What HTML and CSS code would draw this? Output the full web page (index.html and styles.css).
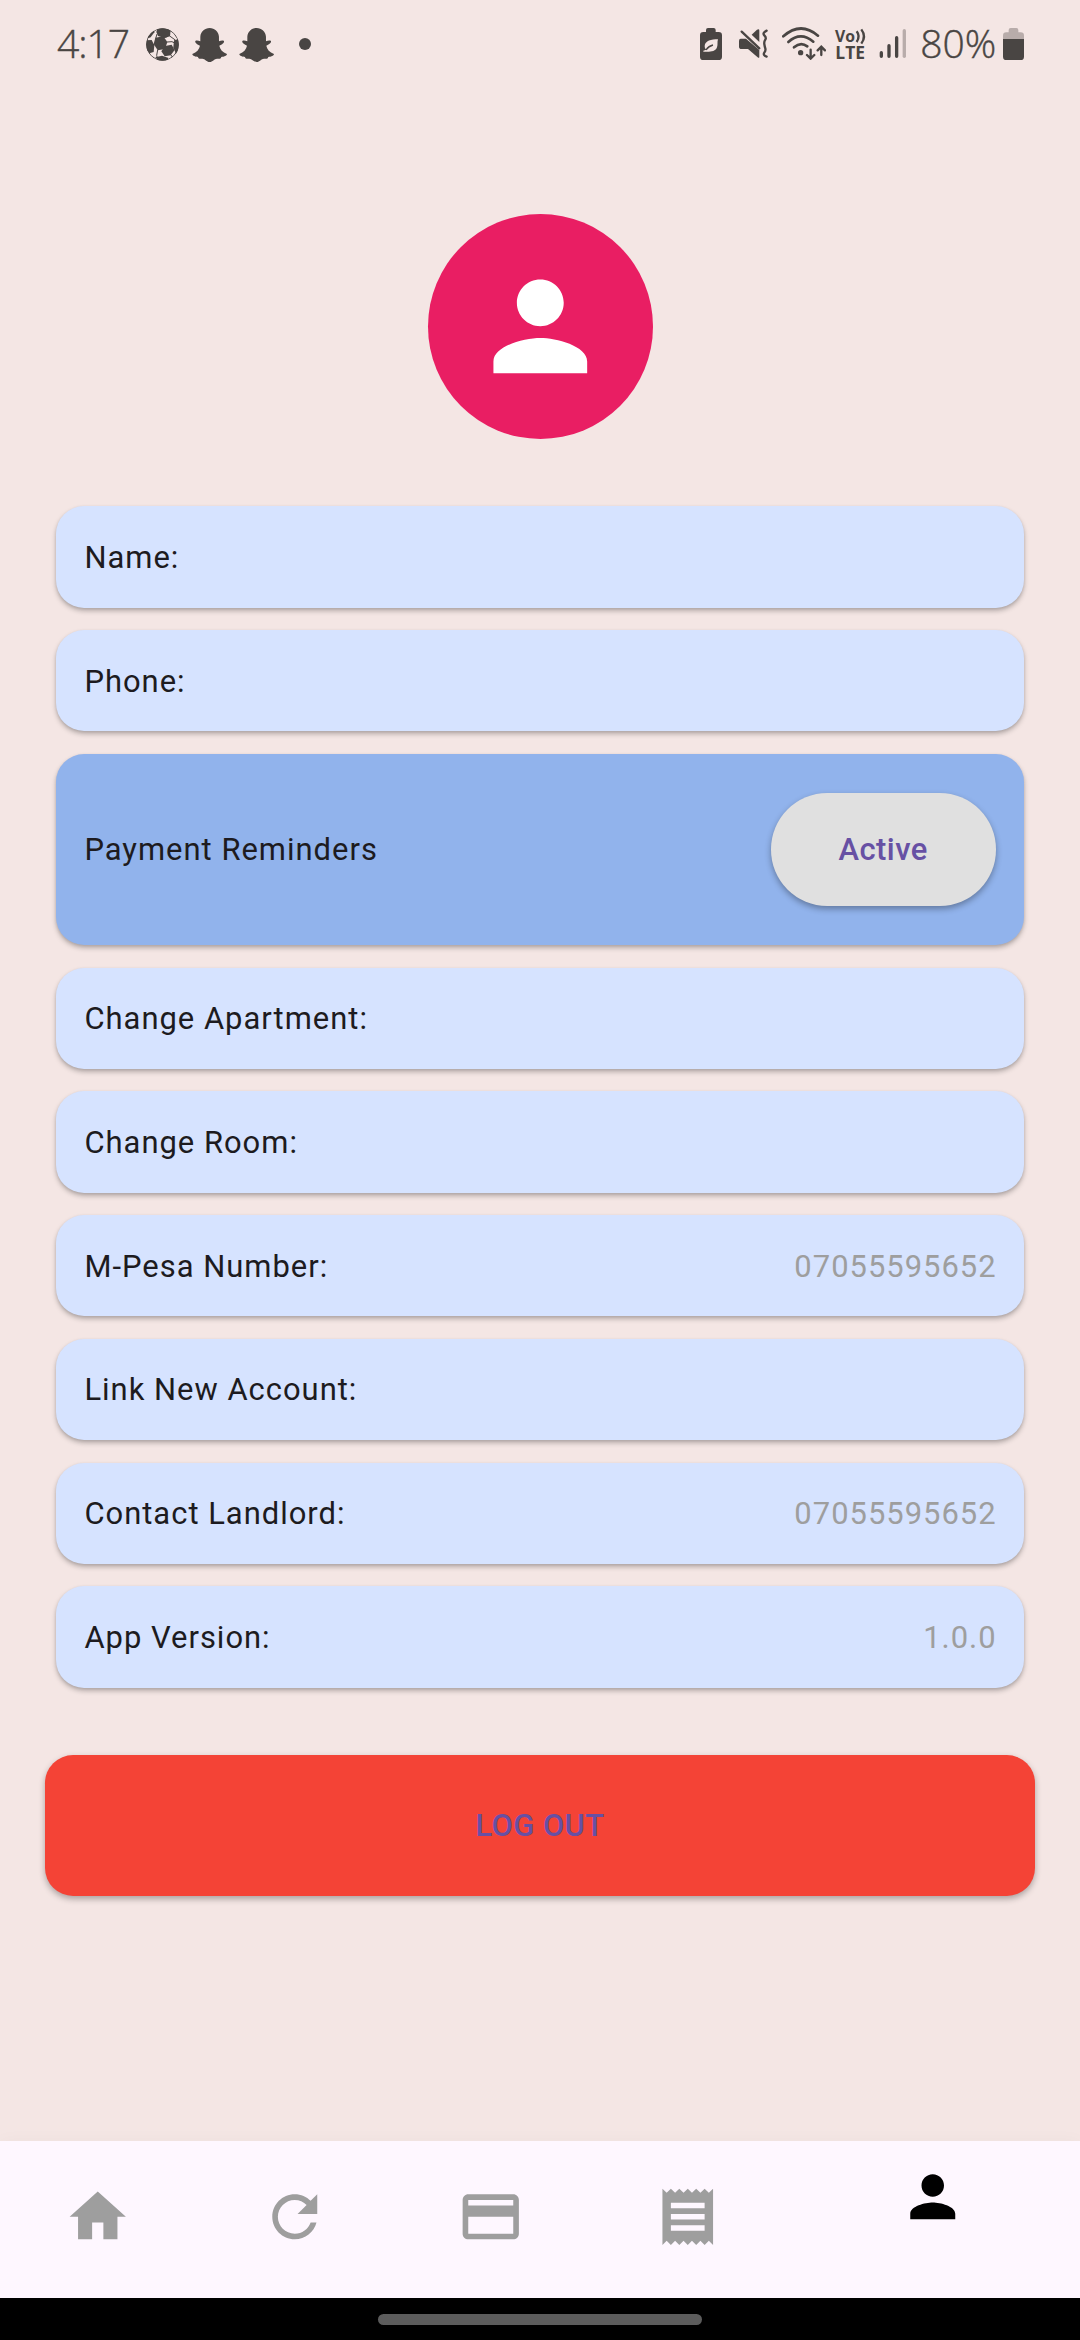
FILE: index.html
```html
<!DOCTYPE html>
<html lang="en">
<head>
<meta charset="utf-8">
<title>Profile</title>
<link rel="stylesheet" href="styles.css">
</head>
<body>
<div class="screen">
  <header class="status-bar">
    <div class="status-left">
      <span class="clock">4:17</span>
      <svg class="ball" viewBox="0 0 99 99">
        <defs><clipPath id="ball-clip"><circle cx="49.500" cy="49.500" r="49"/></clipPath></defs>
        <g clip-path="url(#ball-clip)" fill="#494543">
          <path d="M28 29 52 25 64 42 57 63 35 67 23 48Z"/>
          <path d="M34 2 Q55-4 74 6L72 25 56 30 36 24 31 12Z"/>
          <path d="M-2 37 17 36 25 52 23 72 10 76-2 60Z"/>
          <path d="M57 54 77 50 86 66 74 82 56 85 46 70Z"/>
          <path d="M84 37 100 33V74L90 78 82 58Z"/>
          <path d="M28 88 48 83 68 90 60 100H38Z"/>
          <path d="M2 32 Q8 14 24 5L25 13 14 28Z"/>
          <g fill="none" stroke="#494543" stroke-width="3">
            <path d="M33 18 29 32M62 27 52 28M63 42 78 41 86 45M71 24 88 36M57 60 61 56M24 49 16 52M35 66 32 82M32 82 34 90M74 80 80 88"/>
            <circle cx="49.500" cy="49.500" r="48"/>
          </g>
        </g>
      </svg>
      <svg class="ghost" viewBox="0 0 106 102"><path d="M53 0C68 0 80 11 81 26V40C86 39 91 36 96 39 98 44 90 50 82 53 84 64 92 73 105 78 105 84 95 86 88 87 86 94 81 92 75 92 67 92 62 102 53 102S39 92 31 92C25 92 20 94 18 87 11 86 1 84 1 78 14 73 22 64 24 53 16 50 8 44 10 39 15 36 20 39 25 40V26C26 11 38 0 53 0Z"/></svg>
      <svg class="ghost" viewBox="0 0 106 102"><path d="M53 0C68 0 80 11 81 26V40C86 39 91 36 96 39 98 44 90 50 82 53 84 64 92 73 105 78 105 84 95 86 88 87 86 94 81 92 75 92 67 92 62 102 53 102S39 92 31 92C25 92 20 94 18 87 11 86 1 84 1 78 14 73 22 64 24 53 16 50 8 44 10 39 15 36 20 39 25 40V26C26 11 38 0 53 0Z"/></svg>
      <span class="more-dot"></span>
    </div>
    <div class="status-right">
      <svg class="battery-saver" viewBox="0 0 66 96">
        <path d="M18 12V6Q18 0 24 0H41Q47 0 47 6V12H56Q66 12 66 22V86Q66 96 56 96H10Q0 96 0 86V22Q0 12 10 12Z"/>
        <path d="M54 34C34 34 15 38 14 54 14 60 16 63 19 65L10 68V71C24 72 47 73 51 58 54 50 51 42 54 34Z" fill="#f4e6e4"/>
        <path d="M18 66Q26 54 39 51" fill="none" stroke="#494543" stroke-width="4"/>
      </svg>
      <svg class="mute" viewBox="0 0 88 88">
        <path d="M5 29H21L61 63V83Q61 89 56 85L27 60H8Q0 60 0 53V36Q0 29 5 29Z"/>
        <path d="M38 17 54 2Q61-2 61 5V39Z"/>
        <path d="M8 8 61 58" fill="none" stroke="#494543" stroke-width="7" stroke-linecap="round"/>
        <path d="M83 5Q69 12 76 19T79 32 76 45 79 58 76 71 83 83" fill="none" stroke="#494543" stroke-width="7" stroke-linecap="round"/>
      </svg>
      <svg class="wifi" viewBox="0 0 133 100">
        <g fill="none" stroke="#494543" stroke-width="8" stroke-linecap="round">
          <path d="M4 28Q56-18 108 26"/><path d="M19 45Q56 12 94 44"/><path d="M36 61Q56 43 76 58"/>
          <path d="M86 68V93M75 84 86 95 97 84M118 84V60M107 70 118 59 129 70" stroke-width="7"/>
        </g><circle cx="56" cy="77" r="8"/>
      </svg>
      <svg class="volte" viewBox="0 0 94 96">
        <text x="0" y="41" font-size="50" textLength="60" lengthAdjust="spacingAndGlyphs">Vo</text>
        <path d="M65 10Q77 25 65 42M79 4Q95 25 79 47" fill="none" stroke="#494543" stroke-width="7"/>
        <text x="1" y="93" font-size="52" textLength="89" lengthAdjust="spacingAndGlyphs">LTE</text>
      </svg>
      <svg class="signal" viewBox="0 0 82 88"><g stroke="#494543" stroke-width="10" stroke-linecap="round"><path d="M7 71V82M30 50V82M53 26V82"/><path d="M76 5V82" stroke="#b8acaa"/></g></svg>
      <span class="percent">80%</span>
      <svg class="battery" viewBox="0 0 63 96">
        <path d="M17 13V6Q17 0 23 0H40Q46 0 46 6V13H53Q63 13 63 23V34H0V23Q0 13 10 13Z" fill="#b8acaa"/>
        <path d="M0 33H63V86Q63 96 53 96H10Q0 96 0 86Z"/>
      </svg>
    </div>
  </header>

  <main class="profile">
    <div class="avatar"><svg viewBox="0 0 24 24"><path d="M12 12c2.210 0 4-1.790 4-4s-1.790-4-4-4-4 1.790-4 4 1.790 4 4 4zm0 2c-2.670 0-8 1.340-8 4v2h16v-2c0-2.660-5.330-4-8-4z"/></svg></div>
    <section class="settings">
      <div class="row"><span>Name:</span></div>
      <div class="row"><span>Phone:</span></div>
      <div class="row row-reminders"><span>Payment Reminders</span><button class="toggle">Active</button></div>
      <div class="row"><span>Change Apartment:</span></div>
      <div class="row"><span>Change Room:</span></div>
      <div class="row"><span>M-Pesa Number:</span><span class="value">07055595652</span></div>
      <div class="row"><span>Link New Account:</span></div>
      <div class="row"><span>Contact Landlord:</span><span class="value">07055595652</span></div>
      <div class="row"><span>App Version:</span><span class="value">1.0.0</span></div>
    </section>
    <button class="logout">LOG OUT</button>
  </main>

  <nav class="tabs">
    <a class="tab"><svg viewBox="0 0 24 24"><path d="M10 20v-6h4v6h5v-8h3L12 3 2 12h3v8z"/></svg></a>
    <a class="tab"><svg viewBox="0 0 24 24"><path d="M17.650 6.350C16.200 4.900 14.210 4 12 4c-4.420 0-7.990 3.580-7.990 8s3.570 8 7.990 8c3.730 0 6.840-2.550 7.730-6h-2.080c-.82 2.330-3.040 4-5.650 4-3.310 0-6-2.690-6-6s2.690-6 6-6c1.660 0 3.140.69 4.220 1.780L13 11h7V4l-2.350 2.350z"/></svg></a>
    <a class="tab"><svg viewBox="0 0 24 24"><path d="M20 4H4c-1.110 0-1.990.89-1.990 2L2 18c0 1.110.89 2 2 2h16c1.110 0 2-.89 2-2V6c0-1.110-.89-2-2-2zm0 14H4v-6h16v6zm0-10H4V6h16v2z"/></svg></a>
    <a class="tab"><svg viewBox="0 0 24 24"><path d="M18 17H6v-2h12v2zm0-4H6v-2h12v2zm0-4H6V7h12v2zM3 22l1.500-1.500L6 22l1.500-1.500L9 22l1.500-1.500L12 22l1.500-1.500L15 22l1.500-1.500L18 22l1.500-1.500L21 22V2l-1.500 1.500L18 2l-1.500 1.500L15 2l-1.500 1.500L12 2l-1.500 1.500L9 2 7.500 3.500 6 2 4.500 3.500 3 2v20z"/></svg></a>
    <a class="tab tab-active"><svg viewBox="0 0 24 24"><path d="M12 12c2.210 0 4-1.790 4-4s-1.790-4-4-4-4 1.790-4 4 1.790 4 4 4zm0 2c-2.670 0-8 1.340-8 4v2h16v-2c0-2.660-5.330-4-8-4z"/></svg></a>
  </nav>
  <footer class="gesture-bar"><span class="handle"></span></footer>
</div>
</body>
</html>
```

FILE: styles.css
```css
* { box-sizing: border-box; }
body { margin: 0; }
svg { display: block; flex: none; }
button { border: 0; margin: 0; padding: 0; font: inherit; letter-spacing: inherit; }

.screen {
  width: 1080px;
  height: 2340px;
  display: flex;
  flex-direction: column;
  overflow: hidden;
  background: #f4e6e4;
  font-family: Roboto, sans-serif;
  font-size: 30.94px;
  letter-spacing: 1px;
  color: #1d1b20;
}

/* Status bar */
.status-bar {
  height: 88px;
  padding: 0 17px 0 57px;
  display: flex;
  justify-content: space-between;
  align-items: center;
  color: #494543;
  fill: #494543;
  font-family: "Open Sans", "Noto Sans", sans-serif;
  font-size: 39px;
  font-weight: 350;
  letter-spacing: 0;
}
.status-left, .status-right { display: flex; align-items: center; }
.clock { width: 89px; padding-bottom: 3px; letter-spacing: -1px; -webkit-text-stroke: .4px #494543; }
.ball { width: 33px; height: 33px; margin-right: 13px; }
.ghost { width: 35.300px; height: 34px; margin: 2px 11.700px 0 0; }
.more-dot { width: 12px; height: 12px; margin-left: 13px; border-radius: 50%; background: #494543; }
.status-right { padding-right: 39px; }
.battery-saver { width: 22px; height: 32px; margin-right: 17px; }
.mute { width: 29.300px; height: 29.300px; margin-right: 14.300px; }
.wifi { width: 44.300px; height: 33.300px; margin: -1px 9px 0 0; }
.volte { width: 31.300px; height: 32px; margin-right: 12.300px; font-family: "Open Sans", sans-serif; font-weight: 700; overflow: visible; }
.signal { width: 27.300px; height: 29.300px; margin-right: 14px; }
.percent { width: 82.700px; padding-bottom: 3px; white-space: nowrap; -webkit-text-stroke: .4px #494543; }
.battery { width: 21px; height: 32px; }

/* Profile content */
.profile {
  flex: 1;
  padding: 125.750px 45px 0;
  display: flex;
  flex-direction: column;
  align-items: center;
}
.avatar {
  width: 225px;
  height: 225px;
  flex: none;
  display: flex;
  align-items: center;
  justify-content: center;
  border-radius: 50%;
  background: #e91e63;
  fill: #fff;
}
.avatar svg { width: 140.600px; height: 140.600px; }
.settings {
  align-self: stretch;
  margin: 67.500px 11.250px;
  display: flex;
  flex-direction: column;
  gap: 22.500px;
}
.row {
  height: 101.250px;
  padding: 1px 28.125px 0;
  display: flex;
  align-items: center;
  justify-content: space-between;
  border-radius: 28.125px;
  background: #d6e3ff;
  box-shadow: 0 3px 5px rgba(0, 0, 0, .25), 0 1px 3px rgba(0, 0, 0, .08);
}
.row-reminders { height: 191.250px; padding-top: 0; background: #91b3ec; }
.value { margin-right: -1px; color: #9e9e9e; }
.toggle {
  width: 225px;
  height: 112.500px;
  padding-top: 1px;
  border-radius: 56.250px;
  background: #e0e0e0;
  color: #6750a4;
  font-weight: 500;
  letter-spacing: .45px;
  box-shadow: 0 3px 6px rgba(0, 0, 0, .32);
}
.logout {
  align-self: stretch;
  height: 140.625px;
  padding-top: 1px;
  border-radius: 28.125px;
  background: #f44336;
  color: #6750a4;
  font-weight: 500;
  letter-spacing: .4px;
  box-shadow: 0 3px 6px rgba(0, 0, 0, .3);
}

/* Bottom navigation */
.tabs {
  height: 157.500px;
  flex: none;
  display: flex;
  background: #fef7ff;
  fill: #9e9e9e;
  box-shadow: 0 0 16px rgba(0, 0, 0, .03);
}
.tab { flex: 1; display: flex; justify-content: center; padding-top: 42px; }
.tab svg { width: 67.500px; height: 67.500px; }
.tab-active { flex: 1.5; padding-top: 22.500px; fill: #000; }
.gesture-bar {
  height: 42px;
  flex: none;
  padding-top: 16px;
  background: #000;
}
.handle {
  display: block;
  width: 324px;
  height: 11px;
  margin: 0 auto;
  border-radius: 6px;
  background: #5c5c5c;
}
```
